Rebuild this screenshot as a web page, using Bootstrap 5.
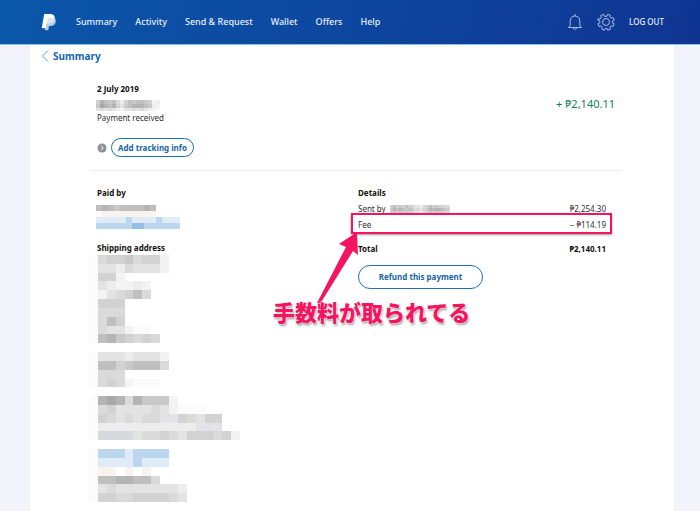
<!DOCTYPE html>
<html lang="en">
<head>
<meta charset="utf-8">
<meta name="viewport" content="width=device-width, initial-scale=1">
<title>Summary</title>
<link href="https://cdn.jsdelivr.net/npm/bootstrap@5.3.0/dist/css/bootstrap.min.css" rel="stylesheet">
<style>
  body { background: #f3f4fa; font-family: "Noto Sans", "Noto Sans CJK JP", sans-serif; font-size: 8px; line-height: 14px; color: #2c2e2f; }
  .topbar { background: linear-gradient(100deg, #0a57a9 0%, #0d48a0 45%, #0f3592 100%); height: 45px; padding: 0 36px 1px 41px; border-bottom: 1px solid #8cc4e4; }
  .topbar a { color: #e6eefa; text-decoration: none; font-size: 9px; font-weight: 500; }
  .topbar .main-links { gap: 18px; margin-left: 19px; }
  .topbar .side-links { gap: 14px; }
  .topbar .logout { font-size: 8px; }
  .icon-btn { background: none; border: 0; padding: 0; display: flex; }
  .sheet { background: #fff; margin: 0 26px 0 30px; min-height: calc(100vh - 45px); padding: 3px 52px 6px 60px; }
  .back { color: #1565b0; text-decoration: none; font-size: 10px; font-weight: 700; line-height: 16px; gap: 4px; margin-left: -49px; }
  .inset { padding: 0 7px; }
  h2 { font-size: 8px; line-height: 14px; font-weight: 700; color: #111; margin: 0; }
  .date-line { margin-top: 16px; }
  .amount { color: #12805c; font-size: 11px; line-height: 16px; margin-top: 14px; }
  .pill { border: 1px solid #1c6fb3; border-radius: 20px; background: #fff; color: #1565a8; font-weight: 700; font-size: 8px; line-height: 17px; padding: 0 6px; }
  .pill.wide { line-height: 22px; width: 125px; margin-top: 1px; }
  .tracking { margin-top: 13px; }
  .rule { border-top: 1px solid #f0f1f3; margin-top: 13px; }
  .parties { padding-top: 15px; }
  .mosaic { display: block; }
  .date-line .mosaic { margin-left: -1px; }
  .payer { margin: 5px 0 12px -1px; }
  .address { margin-left: -8px; }
  .statement { width: 248px; margin-top: 1px; }
  .statement th, .statement td { padding: 0; font-weight: 400; height: 16px; line-height: 14px; }
  .statement .total th, .statement .total td { font-weight: 700; color: #111; height: 31px; border-top: 1px solid #999; }
  .details { padding-left: 2px; }
  .frame { left: -7px; top: 27px; width: 261px; height: 21px; border: 2px solid #f5145f; box-shadow: 0 1px 2px #0006; pointer-events: none; }
  .arrow { left: -42px; top: 46px; pointer-events: none; }
  .callout-note { left: -85px; top: 111px; font: 900 22px/28px "Noto Sans CJK JP", sans-serif; color: #f5145f; white-space: nowrap; text-shadow: 0 0 2px #fff, 0 0 2px #fff, 1px 2px 2px #999; pointer-events: none; }
</style>
</head>
<body>
<nav class="topbar d-flex align-items-center justify-content-between">
  <div class="d-flex align-items-center">
    <a href="#" aria-label="Home" class="d-flex">
      <svg width="16" height="18" viewBox="0 0 16 18"><path d="M6 4.500h4.500c3.300 0 4.700 1.300 4.200 4.300-.5 3-2.300 4.200-5.200 4.200H8l-.7 4.300H3.800z" fill="#b6cce9"/><path d="M3.200 1H9c3.500 0 5 1.700 4.500 4.500-.6 3.400-2.800 4.800-6 4.800H5.500L4.700 15.300H.7z" fill="#fff"/><path d="M6.600 4.700h4c1.200 0 2.200.2 2.900.8-.6 3.400-2.800 4.800-6 4.800H5.700z" fill="#dbe6f5"/></svg>
    </a>
    <div class="main-links d-flex">
      <a href="#">Summary</a><a href="#">Activity</a><a href="#">Send &amp; Request</a><a href="#">Wallet</a><a href="#">Offers</a><a href="#">Help</a>
    </div>
  </div>
  <div class="side-links d-flex align-items-center">
    <button class="icon-btn" type="button" aria-label="Notifications">
      <svg width="16" height="18" viewBox="0 0 16 18" fill="none" stroke="#b9cdec" stroke-width=".9"><path d="M8 1v2M3.200 12.500V8.500C3.200 5 5 3 8 3s4.800 2 4.800 5.500v4l1.700 2h-13zM6 14.700c.3 2 3.700 2 4 0"/></svg>
    </button>
    <button class="icon-btn" type="button" aria-label="Settings">
      <svg width="18" height="18" viewBox="0 0 18 18" fill="none" stroke="#b9cdec" stroke-width=".9" stroke-linejoin="round"><circle cx="9" cy="9" r="3.500"/><path d="M7.400 3.300 6.800 1.300 3.600 2.600l.8 2-1.500 1.500-2-.3L1 7.300l1.800.8v1.800L1 10.700l1 2.800 2-.5 1.300 1.300-.5 2 2.700.9L8.200 15.400h1.700l.8 1.800 2.700-1-.5-2 1.300-1.300 2 .5 1-2.700-1.800-.8V8.100l1.800-.8-1-2.700-2 .5-1.300-1.300.5-1.500-2.700-1-.8 2z"/></svg>
    </button>
    <a href="#" class="logout">LOG OUT</a>
  </div>
</nav>

<main class="sheet">
  <a href="#" class="back d-inline-flex align-items-center">
    <svg width="8" height="12" viewBox="0 0 8 12" fill="none" stroke="#4aa3d4"><path d="M7 .5 1.500 6 7 11.500"/></svg>Summary
  </a>

  <section class="inset date-line d-flex justify-content-between">
    <div>
      <h2>2 July 2019</h2>
      <svg class="mosaic" width="68" height="15" data-cell="4" data-rows=".,5876742576776512,6987853678887621,3434321334343210"></svg>
      <div>Payment received</div>
      <div class="tracking d-flex align-items-center gap-1">
        <svg width="10" height="10" viewBox="0 0 10 10"><circle cx="5" cy="5" r="4.500" fill="#8b9096"/><path d="M4 2.700 6.300 5 4 7.300" fill="none" stroke="#fff"/></svg>
        <button type="button" class="pill">Add tracking info</button>
      </div>
    </div>
    <div class="amount">+ ₱2,140.11</div>
  </section>

  <div class="rule"></div>

  <section class="inset parties row gx-0">
    <div class="col-6">
      <h2>Paid by</h2>
      <svg class="mosaic payer" width="84" height="24" data-cell="6" data-rows="7876777787,0ppppppppp,cccccbccccbccc,bbbbbbBBbbbbbb"></svg>
      <h2>Shipping address</h2>
      <svg class="mosaic address" width="160" height="247" viewBox="0 0 162 252" preserveAspectRatio="none" shape-rendering="crispEdges" data-cell="9" data-rows="045564551,033243331,0551,0321121,0134574,0555,0444,0475,0433100,07865454,,033323331,077567774,0444,04541000,,0898486661,0453333431000,05434344ll54355,022222222222ll3,0dddd344543555451,,0bbbcbbbb,0ccccbccc,0pp.p.p,07788774,03433333332,05544555543"></svg>
    </div>
    <div class="col-6 details">
      <div class="position-relative">
        <h2>Details</h2>
        <table class="statement">
          <tbody>
            <tr><th scope="row"><span class="d-flex align-items-center gap-1">Sent by <svg class="mosaic" width="60" height="9" data-cell="3" data-rows="57565755332457565544,68787676443568788765,56565655332456565544"></svg></span></th><td class="text-end">₱2,254.30</td></tr>
            <tr><th scope="row">Fee</th><td class="text-end">− ₱114.19</td></tr>
            <tr class="total"><th scope="row">Total</th><td class="text-end">₱2,140.11</td></tr>
          </tbody>
        </table>
        <button type="button" class="pill wide">Refund this payment</button>
        <div class="frame position-absolute"></div>
        <svg class="arrow position-absolute" width="46" height="74" viewBox="0 0 46 74"><path d="M41 0 23 12l7 3L1 71l3 1L37 19l5 4z" fill="#f5145f"/></svg>
        <div class="callout-note position-absolute">手数料が取られてる</div>
      </div>
    </div>
  </section>
</main>

<script>
  // Each character of data-rows is one cell of a redaction mosaic.
  const shade = {0:'#fbfbfc',1:'#f3f3f3',2:'#ededee',3:'#e3e3e3',4:'#dadada',5:'#d2d2d2',6:'#c9c9c9',7:'#bfbfc0',8:'#b4b4b5',9:'#a8a8a8',b:'#bcd7ed',B:'#94bee2',c:'#dfecf7',p:'#f8f3ef',l:'#e2e2e8',d:'#d7d9df'};
  document.querySelectorAll('.mosaic').forEach(svg => {
    const n = +svg.dataset.cell, rows = svg.dataset.rows.split(',');
    svg.innerHTML = rows.map((row, y) => [...row].map((c, x) =>
      shade[c] ? `<rect x="${x * n}" y="${y * n}" width="${n}" height="${n}" fill="${shade[c]}"/>` : '').join('')).join('');
  });
</script>
<script src="https://cdn.jsdelivr.net/npm/bootstrap@5.3.0/dist/js/bootstrap.bundle.min.js"></script>
</body>
</html>
